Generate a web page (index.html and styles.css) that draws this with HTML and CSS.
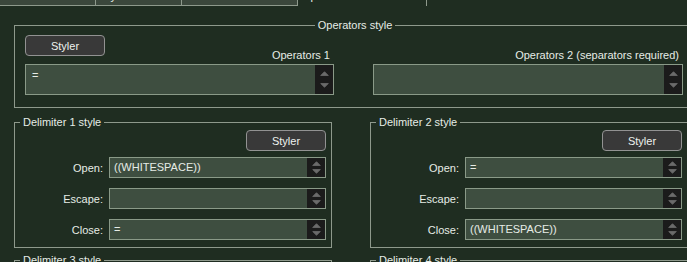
FILE: index.html
```html
<!DOCTYPE html>
<html lang="en">
<head>
  <meta charset="UTF-8">
  <meta name="viewport" content="width=device-width, initial-scale=1.0">
  <title>User Defined Language</title>
  <link rel="stylesheet" href="styles.css">
</head>
<body>
  <!-- Tab strip (cut off at the top) -->
  <div class="tabs">
    <div class="tab tab-folder"><span>Folder &amp; Default</span></div>
    <div class="tab tab-keywords"><span>Keywords Lists</span></div>
    <div class="tab tab-comment"><span>Comment &amp; Number</span></div>
    <div class="tab tab-active"><span>Operators &amp; Delimiters</span></div>
  </div>

  <!-- Operators -->
  <fieldset class="group group-ops">
    <legend>Operators style</legend>
    <div class="ops-grid">
      <div class="ops-col">
        <div class="ops-head">
          <button class="styler">Styler</button>
          <span class="ops-label">Operators 1</span>
        </div>
        <div class="textbox textbox-tall">
          <span class="value">=</span>
          <div class="spin">
            <svg width="9" height="5" viewBox="0 0 9 5"><path d="M4.5 0.7 L8.3 4.5 H0.7 Z"/></svg>
            <svg width="9" height="5" viewBox="0 0 9 5"><path d="M0.7 0.5 H8.3 L4.5 4.3 Z"/></svg>
          </div>
        </div>
      </div>
      <div class="ops-col">
        <div class="ops-head ops-head-right">
          <span class="ops-label">Operators 2 (separators required)</span>
        </div>
        <div class="textbox textbox-tall">
          <span class="value"></span>
          <div class="spin">
            <svg width="9" height="5" viewBox="0 0 9 5"><path d="M4.5 0.7 L8.3 4.5 H0.7 Z"/></svg>
            <svg width="9" height="5" viewBox="0 0 9 5"><path d="M0.7 0.5 H8.3 L4.5 4.3 Z"/></svg>
          </div>
        </div>
      </div>
    </div>
  </fieldset>

  <!-- Delimiters -->
  <div class="delims">
    <fieldset class="group group-delim">
      <legend>Delimiter 1 style</legend>
      <div class="delim-head"><button class="styler">Styler</button></div>
      <div class="delim-rows">
        <label>Open:</label>
        <div class="textbox"><span class="value">((WHITESPACE))</span><div class="spin"><svg width="9" height="5" viewBox="0 0 9 5"><path d="M4.5 0.7 L8.3 4.5 H0.7 Z"/></svg><svg width="9" height="5" viewBox="0 0 9 5"><path d="M0.7 0.5 H8.3 L4.5 4.3 Z"/></svg></div></div>
        <label>Escape:</label>
        <div class="textbox"><span class="value"></span><div class="spin"><svg width="9" height="5" viewBox="0 0 9 5"><path d="M4.5 0.7 L8.3 4.5 H0.7 Z"/></svg><svg width="9" height="5" viewBox="0 0 9 5"><path d="M0.7 0.5 H8.3 L4.5 4.3 Z"/></svg></div></div>
        <label>Close:</label>
        <div class="textbox"><span class="value">=</span><div class="spin"><svg width="9" height="5" viewBox="0 0 9 5"><path d="M4.5 0.7 L8.3 4.5 H0.7 Z"/></svg><svg width="9" height="5" viewBox="0 0 9 5"><path d="M0.7 0.5 H8.3 L4.5 4.3 Z"/></svg></div></div>
      </div>
    </fieldset>

    <fieldset class="group group-delim group-right">
      <legend>Delimiter 2 style</legend>
      <div class="delim-head"><button class="styler">Styler</button></div>
      <div class="delim-rows">
        <label>Open:</label>
        <div class="textbox"><span class="value">=</span><div class="spin"><svg width="9" height="5" viewBox="0 0 9 5"><path d="M4.5 0.7 L8.3 4.5 H0.7 Z"/></svg><svg width="9" height="5" viewBox="0 0 9 5"><path d="M0.7 0.5 H8.3 L4.5 4.3 Z"/></svg></div></div>
        <label>Escape:</label>
        <div class="textbox"><span class="value"></span><div class="spin"><svg width="9" height="5" viewBox="0 0 9 5"><path d="M4.5 0.7 L8.3 4.5 H0.7 Z"/></svg><svg width="9" height="5" viewBox="0 0 9 5"><path d="M0.7 0.5 H8.3 L4.5 4.3 Z"/></svg></div></div>
        <label>Close:</label>
        <div class="textbox"><span class="value">((WHITESPACE))</span><div class="spin"><svg width="9" height="5" viewBox="0 0 9 5"><path d="M4.5 0.7 L8.3 4.5 H0.7 Z"/></svg><svg width="9" height="5" viewBox="0 0 9 5"><path d="M0.7 0.5 H8.3 L4.5 4.3 Z"/></svg></div></div>
      </div>
    </fieldset>

    <fieldset class="group group-delim">
      <legend>Delimiter 3 style</legend>
      <div class="delim-head"><button class="styler">Styler</button></div>
    </fieldset>

    <fieldset class="group group-delim group-right">
      <legend>Delimiter 4 style</legend>
      <div class="delim-head"><button class="styler">Styler</button></div>
    </fieldset>
  </div>
</body>
</html>
```

FILE: styles.css
```css
html, body {
  margin: 0;
  height: 262px;
  overflow: hidden;
}

body {
  background: #1f2d21;
  color: #e6ece6;
  font-family: "Liberation Sans", Arial, sans-serif;
  font-size: 11px;
}

/* Tabs */
.tabs {
  display: flex;
  height: 6px;
}

.tab {
  box-sizing: border-box;
  height: 6px;
  background: #3b473c;
  border-right: 1px solid #8e998c;
  border-bottom: 1px solid #8e998c;
  overflow: hidden;
  padding-left: 5px;
}

.tab span {
  display: block;
  margin-top: -10px;
  line-height: 12px;
  white-space: nowrap;
}

.tab-folder { width: 96px; }
.tab-keywords { width: 86px; padding-left: 1px; }
.tab-comment { width: 116px; }

.tab-active {
  width: 129px;
  height: 6px;
  background: transparent;
  border-bottom: none;
  padding-left: 4px;
}

/* Group boxes */
.group {
  box-sizing: border-box;
  margin: 0;
  min-width: 0;
  border: 1px solid #8e998c;
}

.group legend {
  padding: 0 3px;
  line-height: 13px;
}

.group-ops {
  width: 682px;
  margin: 13px 0 0 14px;
  padding: 3px 10px 12px;
}

.group-ops legend {
  margin: 0 auto;
}

.ops-grid {
  display: grid;
  grid-template-columns: 309px 310px;
  column-gap: 39px;
}

.ops-head {
  display: flex;
  justify-content: space-between;
  align-items: flex-end;
  height: 27px;
  margin-bottom: 2px;
}

.ops-head-right {
  justify-content: flex-end;
}

.ops-head .styler {
  align-self: flex-start;
}

.ops-label {
  line-height: 14px;
  padding-right: 4px;
}

/* Buttons */
.styler {
  box-sizing: border-box;
  width: 80px;
  height: 21px;
  padding: 0;
  background: #393939;
  border: 1px solid #929292;
  border-radius: 4px;
  color: #eef2ee;
  font: inherit;
}

/* Text boxes */
.textbox {
  box-sizing: border-box;
  display: flex;
  height: 21px;
  border: 1px solid #8a9a88;
  background: #3e4e40;
}

.textbox-tall {
  height: 31px;
}

.textbox .value {
  flex: 1;
  padding: 0 4px;
  line-height: 19px;
  white-space: nowrap;
}

.textbox-tall .value {
  padding: 3px 6px;
  line-height: 14px;
}

.spin {
  width: 18px;
  background: #1b1b1b;
  display: flex;
  flex-direction: column;
  justify-content: space-evenly;
  align-items: center;
}

.spin svg {
  display: block;
}

.spin path {
  fill: #6b6b6b;
  stroke: #6b6b6b;
  stroke-width: 0.8;
  stroke-linejoin: round;
}

/* Delimiters */
.delims {
  display: grid;
  grid-template-columns: 318px 322px;
  column-gap: 38px;
  row-gap: 6px;
  margin: 8px 0 0 14px;
}

.group-delim {
  padding: 1px 5px 7px;
}

.group-right {
  padding-right: 9px;
}

.delim-head {
  display: flex;
  justify-content: flex-end;
  margin-bottom: 6px;
}

.delim-rows {
  display: grid;
  grid-template-columns: 1fr 217px;
  column-gap: 6px;
  row-gap: 10px;
  align-items: center;
}

.delim-rows label {
  text-align: right;
}
```
